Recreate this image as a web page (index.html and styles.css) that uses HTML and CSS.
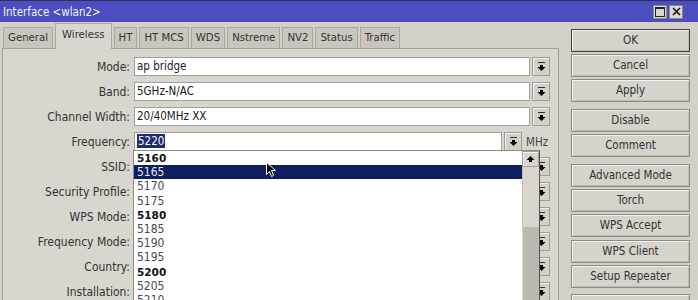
FILE: index.html
```html
<!DOCTYPE html>
<html lang="en">
<head>
    <meta charset="UTF-8">
    <title>Interface &lt;wlan2&gt;</title>
    <link rel="stylesheet" href="styles.css">
</head>
<body>

    <div class="titlebar">
        <span class="title">Interface &lt;wlan2&gt;</span>
        <div class="controls">
            <span class="ctl max"></span>
            <span class="ctl">
                <svg width="9" height="9" viewBox="0 0 9 9"><path d="M1 1 L8 8 M8 1 L1 8" stroke="#111" stroke-width="1.6"/></svg>
            </span>
        </div>
    </div>

    <div class="content">
        <div class="main">
            <div class="tabs">
                <div class="tab">General</div>
                <div class="tab active">Wireless</div>
                <div class="tab">HT</div>
                <div class="tab">HT MCS</div>
                <div class="tab">WDS</div>
                <div class="tab">Nstreme</div>
                <div class="tab">NV2</div>
                <div class="tab">Status</div>
                <div class="tab">Traffic</div>
            </div>

            <div class="panel">
                <div class="row">
                    <label class="label">Mode:</label>
                    <div class="field">ap bridge</div>
                    <span class="dd"><svg width="9" height="10" viewBox="0 0 9 10"><rect x="1" y="0" width="7" height="1" fill="#333"/><rect x="3" y="3" width="3" height="2" fill="#000"/><polygon points="0.5,5 8.5,5 4.5,9" fill="#000"/></svg></span>
                </div>
                <div class="row">
                    <label class="label">Band:</label>
                    <div class="field">5GHz-N/AC</div>
                    <span class="dd"><svg width="9" height="10" viewBox="0 0 9 10"><rect x="1" y="0" width="7" height="1" fill="#333"/><rect x="3" y="3" width="3" height="2" fill="#000"/><polygon points="0.5,5 8.5,5 4.5,9" fill="#000"/></svg></span>
                </div>
                <div class="row">
                    <label class="label">Channel Width:</label>
                    <div class="field">20/40MHz XX</div>
                    <span class="dd"><svg width="9" height="10" viewBox="0 0 9 10"><rect x="1" y="0" width="7" height="1" fill="#333"/><rect x="3" y="3" width="3" height="2" fill="#000"/><polygon points="0.5,5 8.5,5 4.5,9" fill="#000"/></svg></span>
                </div>
                <div class="row">
                    <label class="label">Frequency:</label>
                    <div class="field"><span class="sel">5220</span></div>
                    <span class="dd"><svg width="9" height="10" viewBox="0 0 9 10"><rect x="1" y="0" width="7" height="1" fill="#333"/><rect x="3" y="3" width="3" height="2" fill="#000"/><polygon points="0.5,5 8.5,5 4.5,9" fill="#000"/></svg></span>
                    <span class="unit">MHz</span>
                </div>
                <!-- rows below are covered by the open list -->
                <div class="row">
                    <label class="label">SSID:</label>
                    <div class="field"></div>
                    <span class="dd"><svg width="9" height="10" viewBox="0 0 9 10"><rect x="1" y="0" width="7" height="1" fill="#333"/><rect x="3" y="3" width="3" height="2" fill="#000"/><polygon points="0.5,5 8.5,5 4.5,9" fill="#000"/></svg></span>
                </div>
                <div class="row">
                    <label class="label">Security Profile:</label>
                    <div class="field"></div>
                    <span class="dd"><svg width="9" height="10" viewBox="0 0 9 10"><rect x="1" y="0" width="7" height="1" fill="#333"/><rect x="3" y="3" width="3" height="2" fill="#000"/><polygon points="0.5,5 8.5,5 4.5,9" fill="#000"/></svg></span>
                </div>
                <div class="row">
                    <label class="label">WPS Mode:</label>
                    <div class="field"></div>
                    <span class="dd"><svg width="9" height="10" viewBox="0 0 9 10"><rect x="1" y="0" width="7" height="1" fill="#333"/><rect x="3" y="3" width="3" height="2" fill="#000"/><polygon points="0.5,5 8.5,5 4.5,9" fill="#000"/></svg></span>
                </div>
                <div class="row">
                    <label class="label">Frequency Mode:</label>
                    <div class="field"></div>
                    <span class="dd"><svg width="9" height="10" viewBox="0 0 9 10"><rect x="1" y="0" width="7" height="1" fill="#333"/><rect x="3" y="3" width="3" height="2" fill="#000"/><polygon points="0.5,5 8.5,5 4.5,9" fill="#000"/></svg></span>
                </div>
                <div class="row">
                    <label class="label">Country:</label>
                    <div class="field"></div>
                    <span class="dd"><svg width="9" height="10" viewBox="0 0 9 10"><rect x="1" y="0" width="7" height="1" fill="#333"/><rect x="3" y="3" width="3" height="2" fill="#000"/><polygon points="0.5,5 8.5,5 4.5,9" fill="#000"/></svg></span>
                </div>
                <div class="row">
                    <label class="label">Installation:</label>
                    <div class="field"></div>
                    <span class="dd"><svg width="9" height="10" viewBox="0 0 9 10"><rect x="1" y="0" width="7" height="1" fill="#333"/><rect x="3" y="3" width="3" height="2" fill="#000"/><polygon points="0.5,5 8.5,5 4.5,9" fill="#000"/></svg></span>
                </div>
            </div>

            <!-- open frequency dropdown -->
            <div class="droplist">
                <div class="options">
                    <div class="opt b">5160</div>
                    <div class="opt on">5165</div>
                    <div class="opt">5170</div>
                    <div class="opt">5175</div>
                    <div class="opt b">5180</div>
                    <div class="opt">5185</div>
                    <div class="opt">5190</div>
                    <div class="opt">5195</div>
                    <div class="opt b">5200</div>
                    <div class="opt">5205</div>
                    <div class="opt">5210</div>
                </div>
                <div class="scrollbar">
                    <div class="sb-up"><svg width="9" height="8" viewBox="0 0 9 8"><polygon points="4.5,1 0.5,5 8.5,5" fill="#000"/><rect x="3" y="5" width="3" height="2" fill="#000"/></svg></div>
                    <div class="sb-track"></div>
                    <div class="sb-thumb"></div>
                </div>
            </div>

            <svg class="cursor" width="11" height="16" viewBox="0 0 11 16"><path d="M0.5 0.5 L0.5 12.5 L3.5 9.5 L5.5 14.5 L7.5 13.5 L5.5 8.5 L9.5 8.5 Z" fill="#000" stroke="#fff" stroke-width="1"/></svg>
        </div>

        <div class="side">
            <div class="btn def">OK</div>
            <div class="btn">Cancel</div>
            <div class="btn">Apply</div>
            <div class="btn group">Disable</div>
            <div class="btn">Comment</div>
            <div class="btn group">Advanced Mode</div>
            <div class="btn">Torch</div>
            <div class="btn">WPS Accept</div>
            <div class="btn">WPS Client</div>
            <div class="btn">Setup Repeater</div>
            <div class="btn group"></div>
        </div>
    </div>

</body>
</html>
```

FILE: styles.css
```css
body {
    margin: 0;
    width: 698px;
    height: 300px;
    overflow: hidden;
    background: #d4d0c8;
    font-family: "DejaVu Sans Condensed", "DejaVu Sans", sans-serif;
    font-size: 11px;
    color: #2b2b2b;
}
.titlebar {
    height: 21px;
    border-top: 1px solid #2e3050;
    background: #4a4ec0;
    display: flex;
    align-items: center;
    justify-content: space-between;
    padding: 0 15px 0 3px;
    color: #f2f2ff;
    font-size: 11.5px;
}
.controls {
    display: flex;
}
.ctl {
    width: 14px;
    height: 14px;
    box-sizing: border-box;
    margin-left: 2px;
    background: #dcd9d2;
    border: 1px solid #8d8a84;
    display: flex;
    align-items: center;
    justify-content: center;
}
.ctl.max::after {
    content: "";
    width: 8px;
    height: 7px;
    border: 1px solid #222;
    border-top-width: 2px;
}
.content {
    display: flex;
}
.main {
    position: relative;
    width: 560px;
}
.tabs {
    display: flex;
    align-items: flex-end;
    height: 26px;
    padding-left: 3px;
}
.tab {
    height: 21px;
    line-height: 20px;
    box-sizing: border-box;
    padding: 0 4px;
    margin-right: 2px;
    background: #c9c6bf;
    border: 1px solid #aaa79f;
    border-bottom: none;
    color: #333;
    font-size: 11.3px;
}
.tab.active {
    height: 26px;
    line-height: 22px;
    padding: 0 6px;
    margin-bottom: -1px;
    background: #d9d6cf;
    position: relative;
    z-index: 1;
}
.panel {
    margin-left: 2px;
    width: 557px;
    height: 260px;
    box-sizing: border-box;
    padding: 8px 8px 0 0;
    background: #d9d6cf;
    border: 1px solid #a3a098;
}
.row {
    display: flex;
    align-items: center;
    height: 19px;
    margin-bottom: 6px;
}
.label {
    width: 127px;
    margin-right: 4px;
    text-align: right;
    font-size: 12px;
    color: #333;
}
.field {
    flex: 1;
    height: 19px;
    box-sizing: border-box;
    padding-left: 2px;
    line-height: 17px;
    background: #fff;
    border: 1px solid #a4a19a;
    font-size: 11.5px;
    color: #1a1a1a;
}
.sel {
    background: #1f2d70;
    color: #fff;
    padding: 0 1px;
}
.dd {
    width: 18px;
    height: 19px;
    box-sizing: border-box;
    margin-left: 2px;
    background: #d4d0c8;
    border: 1px solid #a09d96;
    box-shadow: inset 1px 1px #f2f0ec;
    display: flex;
    align-items: center;
    justify-content: center;
}
.unit {
    width: 24px;
    padding-left: 4px;
    font-size: 11.5px;
    color: #444;
}
.droplist {
    position: absolute;
    left: 133px;
    top: 128px;
    width: 407px;
    height: 170px;
    box-sizing: border-box;
    display: flex;
    background: #fff;
    border: 1px solid #8f8c85;
    border-right-color: #555;
}
.options {
    flex: 1;
}
.opt {
    height: 14.2px;
    line-height: 14px;
    padding-left: 3px;
    font-size: 12px;
    color: #4a4a4a;
}
.opt.b {
    font-family: "DejaVu Sans", sans-serif;
    font-weight: bold;
    font-size: 10.5px;
    color: #111;
}
.opt.on {
    background: #0f1e5e;
    color: #e4e6f2;
}
.scrollbar {
    width: 17px;
    display: flex;
    flex-direction: column;
    background: #bcb9b2;
}
.sb-up {
    height: 16px;
    box-sizing: border-box;
    background: #d8d5ce;
    border: 1px solid #a3a098;
    box-shadow: inset 1px 1px #f4f2ee;
    display: flex;
    align-items: center;
    justify-content: center;
}
.sb-track {
    height: 60px;
    background: #d9d6cf;
    border-left: 1px solid #c4c1ba;
}
.sb-thumb {
    flex: 1;
    border-left: 1px solid #d8d5ce;
}
.cursor {
    position: absolute;
    left: 266px;
    top: 140px;
}
.side {
    width: 119px;
    margin-left: 11px;
    padding-top: 7px;
    display: flex;
    flex-direction: column;
}
.btn {
    height: 23px;
    flex-shrink: 0;
    box-sizing: border-box;
    margin-bottom: 2.2px;
    line-height: 21px;
    text-align: center;
    background: #d6d3cc;
    border: 1px solid #8e8b84;
    box-shadow: inset 1px 1px #f4f2ee, inset -1px -1px #bfbcb5;
    font-size: 11.5px;
    color: #333;
}
.btn.def {
    border-color: #404040;
}
.btn.group {
    margin-top: 4.5px;
}
```
